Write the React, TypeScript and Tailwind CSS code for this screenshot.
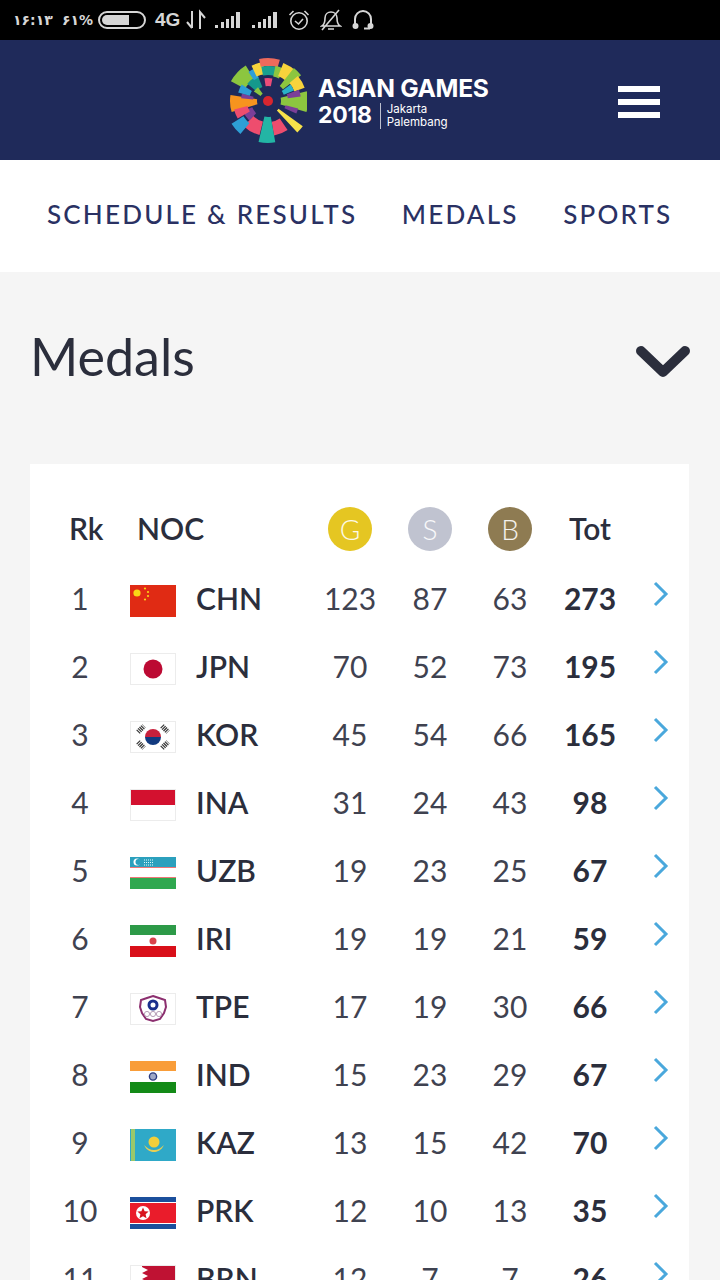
import type { ReactNode } from "react";

const sans = "font-['Lato','Noto_Sans',sans-serif]";

// [startDeg, endDeg, innerR, outerR, colour], clockwise from 12 o'clock
const sectors: [number, number, number, number, string][] = [
  [-62, -32, 26, 42, "#8cc63f"],
  [-50, -22, 15, 27, "#14988c"],
  [-34, -22, 25, 35, "#2e9fd6"],
  [-25, -7, 27, 39, "#f7d33c"],
  [-12, 16, 35, 43, "#ee6a5c"],
  [-11, 14, 26, 35, "#1aa08f"],
  [-9, 11, 15, 23, "#ec4c78"],
  [12, 26, 25, 36, "#8cc63f"],
  [22, 44, 27, 41, "#f7d33c"],
  [38, 52, 19, 42, "#8cc63f"],
  [50, 70, 28, 39, "#f7d33c"],
  [54, 68, 17, 28, "#29b2c8"],
  [-107, -81, 11, 38, "#f7941e"],
  [-84, -74, 15, 27, "#7b3f98"],
  [-74, -58, 19, 31, "#2e9fd6"],
  [-56, -36, 9, 17, "#8cc63f"],
  [76, 106, 13, 40, "#8cc63f"],
  [70, 82, 20, 33, "#7b3f98"],
  [104, 114, 18, 31, "#7b3f98"],
  [126, 137, 13, 43, "#f7e14a"],
  [146, 170, 21, 35, "#ee4d6e"],
  [170, 193, 16, 42, "#23b5a5"],
  [194, 224, 21, 35, "#ee4d6e"],
  [220, 238, 29, 43, "#2e9fd6"],
  [224, 248, 17, 27, "#7b3f98"],
  [240, 256, 21, 35, "#ee4d6e"],
];

function sectorPath(a: number, b: number, r1: number, r2: number) {
  const pt = (deg: number, r: number) => {
    const t = (deg * Math.PI) / 180;
    return `${(r * Math.sin(t)).toFixed(2)} ${(-r * Math.cos(t)).toFixed(2)}`;
  };
  return `M${pt(a, r2)}A${r2} ${r2} 0 0 1 ${pt(b, r2)}L${pt(b, r1)}A${r1} ${r1} 0 0 0 ${pt(a, r1)}Z`;
}

function Logo() {
  return (
    <svg width="78" height="88" viewBox="-39 -44 78 88" className="shrink-0 mt-[2px]">
      {sectors.map(([a, b, r1, r2, c], i) => (
        <path key={i} d={sectorPath(a, b, r1, r2)} fill={c} />
      ))}
      <circle r="5" fill="#d8262f" />
    </svg>
  );
}

function StatusBar() {
  return (
    <div className="h-10 bg-black flex items-center text-[#d6d6d6] font-['DejaVu_Sans',sans-serif] pl-[13px]">
      <span className="text-[14px] font-bold w-[49px]">۱۶:۱۳</span>
      <span className="text-[14px] font-bold w-[36px]">۶۱%</span>
      <div className="w-[48px] h-[18px] rounded-full border-2 border-[#d6d6d6] p-[2px] overflow-hidden">
        <div className="h-full w-[27px] bg-[#d6d6d6] rounded-l-full" />
      </div>
      <span className="ml-[9px] text-[19px] font-bold font-['Liberation_Sans',sans-serif]">4G</span>
      <svg width="20" height="22" viewBox="0 0 20 22" className="ml-[6px]" fill="none" stroke="#d6d6d6" strokeWidth="2">
        <path d="M6 2v17M1 13l5 6M14 20V3l5 6" />
      </svg>
      {[0, 1].map((n) => (
        <svg key={n} width="26" height="18" viewBox="0 0 26 18" className={n === 0 ? "ml-[9px]" : "ml-[11px]"} fill="#d6d6d6">
          <path d="M0 14h3v3H0zM6 11h3v6H6zM11 8h3v9h-3zM16 5h3v12h-3zM21 1h4v16h-4z" />
        </svg>
      ))}
      <svg width="22" height="22" viewBox="0 0 22 22" className="ml-[10px]" fill="none" stroke="#d6d6d6" strokeWidth="1.6">
        <circle cx="11" cy="12" r="8.2" />
        <path d="M7 12l3.500 3L15 10M1.500 6L5.500 2M20.500 6l-4-4" />
      </svg>
      <svg width="22" height="24" viewBox="0 0 22 24" className="ml-[10px]" fill="none" stroke="#d6d6d6" strokeWidth="1.6">
        <path d="M2 18c3-2 3-5 3-8 0-4 3-6 6-6s6 2 6 6c0 3 0 6 3 8zM8 21h6M2 22L19 2" />
      </svg>
      <svg width="22" height="22" viewBox="0 0 22 22" className="ml-[10px]" fill="none" stroke="#d6d6d6" strokeWidth="2">
        <path d="M3 16V10a8 8 0 0 1 16 0v6" />
        <circle cx="3.500" cy="17" r="2" fill="#d6d6d6" />
        <circle cx="18.500" cy="17" r="2" fill="#d6d6d6" />
        <path d="M18 19.500h-6" />
      </svg>
    </div>
  );
}

function Flag({ children, border }: { children: ReactNode; border?: boolean }) {
  return (
    <svg width="46" height="32" viewBox="0 0 46 32" className="block mt-[6px]">
      {children}
      {border && <rect x="0.5" y="0.5" width="45" height="31" fill="none" stroke="#ececec" />}
    </svg>
  );
}

const flags: Record<string, ReactNode> = {
  CHN: (
    <Flag>
      <rect width="46" height="32" fill="#e02b14" />
      <circle cx="7" cy="8" r="3.600" fill="#f9d616" />
      <circle cx="15" cy="3.500" r="1.100" fill="#f9d616" />
      <circle cx="18" cy="7" r="1.100" fill="#f9d616" />
      <circle cx="18" cy="11" r="1.100" fill="#f9d616" />
      <circle cx="15" cy="14.500" r="1.100" fill="#f9d616" />
    </Flag>
  ),
  JPN: (
    <Flag border>
      <rect width="46" height="32" fill="#fff" />
      <circle cx="23" cy="16" r="9.500" fill="#bc0a33" />
    </Flag>
  ),
  KOR: (
    <Flag border>
      <rect width="46" height="32" fill="#fff" />
      <path d="M15 16a8 8 0 0 1 16 0z" fill="#c8203c" />
      <path d="M15 16a8 8 0 0 0 16 0z" fill="#123a80" />
      <g stroke="#333" strokeWidth="5" strokeDasharray="1.200 .8">
        <path d="M8 11l6-6M32 5l6 6M8 21l6 6M32 27l6-6" />
      </g>
    </Flag>
  ),
  INA: (
    <Flag border>
      <rect width="46" height="32" fill="#fff" />
      <rect width="46" height="16" fill="#d3112f" />
    </Flag>
  ),
  UZB: (
    <Flag>
      <rect width="46" height="32" fill="#fff" />
      <rect width="46" height="10" fill="#2ba0bd" />
      <rect y="21" width="46" height="11" fill="#2fa84f" />
      <rect y="10" width="46" height="1" fill="#e77" />
      <rect y="20" width="46" height="1" fill="#e77" />
      <circle cx="7" cy="5" r="3.500" fill="#fff" />
      <circle cx="8.500" cy="5" r="3" fill="#2ba0bd" />
      <path d="M14 3h9M14 5.500h9M14 8h9" stroke="#dff" strokeDasharray="1 1" />
    </Flag>
  ),
  IRI: (
    <Flag>
      <rect width="46" height="32" fill="#fff" />
      <rect width="46" height="10" fill="#2d9a48" />
      <rect y="21" width="46" height="11" fill="#d90f19" />
      <circle cx="23" cy="16" r="3.500" fill="#d9434c" />
    </Flag>
  ),
  TPE: (
    <Flag border>
      <rect width="46" height="32" fill="#fff" />
      <path d="M23 3l6 2 6 2 1 7-2 6-4 6-7 2-7-2-4-6-2-6 1-7 6-2z" fill="#fff" stroke="#8c2f6f" strokeWidth="2" />
      <circle cx="23" cy="12" r="4" fill="#fff" stroke="#1b2f8c" strokeWidth="3" />
      <g fill="none" stroke="#b8a0b8" strokeWidth="1">
        <circle cx="17" cy="21" r="2.600" />
        <circle cx="23" cy="21" r="2.600" />
        <circle cx="29" cy="21" r="2.600" />
      </g>
    </Flag>
  ),
  IND: (
    <Flag>
      <rect width="46" height="32" fill="#fff" />
      <rect width="46" height="10" fill="#f99d39" />
      <rect y="21" width="46" height="11" fill="#138a17" />
      <circle cx="23" cy="15.500" r="3.600" fill="#9fa8c8" stroke="#2b3a80" strokeWidth="1.400" />
    </Flag>
  ),
  KAZ: (
    <Flag>
      <rect width="46" height="32" fill="#2fa9c8" />
      <rect x="1" width="4" height="32" fill="#9ac86a" />
      <circle cx="24" cy="13" r="5.500" fill="#f2cf3a" />
      <path d="M14 16c3 6 7 7 10 7s7-1 10-7c-3 3-6 5-10 5s-7-2-10-5z" fill="#e6cf55" />
    </Flag>
  ),
  PRK: (
    <Flag>
      <rect width="46" height="32" fill="#fff" />
      <rect width="46" height="5" fill="#1b4f9c" />
      <rect y="27" width="46" height="5" fill="#1b4f9c" />
      <rect y="6" width="46" height="20" fill="#ea1c2b" />
      <circle cx="13" cy="16" r="7" fill="#fff" />
      <path d="M13 10.500l1.600 3.700 4 .4-3 2.700.9 4-3.500-2.100-3.500 2.100.9-4-3-2.700 4-.4z" fill="#d8141f" />
    </Flag>
  ),
  BRN: (
    <Flag border>
      <rect width="46" height="32" fill="#fff" />
      <path d="M12 0h34v32H12l6-3-6-3 6-3-6-3 6-3-6-3 6-3-6-3 6-3-6-3z" fill="#bf1233" />
    </Flag>
  ),
};

const rows: [number, string, number, number, number, number][] = [
  [1, "CHN", 123, 87, 63, 273],
  [2, "JPN", 70, 52, 73, 195],
  [3, "KOR", 45, 54, 66, 165],
  [4, "INA", 31, 24, 43, 98],
  [5, "UZB", 19, 23, 25, 67],
  [6, "IRI", 19, 19, 21, 59],
  [7, "TPE", 17, 19, 30, 66],
  [8, "IND", 15, 23, 29, 67],
  [9, "KAZ", 13, 15, 42, 70],
  [10, "PRK", 12, 10, 13, 35],
  [11, "BRN", 12, 7, 7, 26],
];

const cols = "grid grid-cols-[100px_66px_114px_80px_80px_80px_80px_59px] items-center";

function Medal({ letter, color }: { letter: string; color: string }) {
  return (
    <div className="flex justify-center">
      <div className={`w-[44px] h-[44px] rounded-full flex items-center justify-center text-white/90 text-[28px] font-light ${color}`}>
        {letter}
      </div>
    </div>
  );
}

export default function App() {
  return (
    <div className={`h-[1280px] w-[720px] overflow-hidden bg-[#f5f5f5] text-[#2b2e3c] ${sans}`}>
      <StatusBar />
      <header className="h-[120px] bg-[#1f2a5a] flex items-center pl-[229px] pr-[60px]">
        <Logo />
        <div className="ml-[11px] mt-[5px] text-white font-['Inter',sans-serif] font-bold leading-none">
          <div className="text-[24.6px] tracking-[-0.3px]">ASIAN GAMES</div>
          <div className="flex items-center mt-[2px]">
            <span className="text-[23px] tracking-[-0.3px]">2018</span>
            <div className="ml-[8px] pl-[6px] border-l border-white/70 text-[11.5px] font-normal leading-[13px]">
              <div>Jakarta</div>
              <div>Palembang</div>
            </div>
          </div>
        </div>
        <div className="ml-auto mt-[3px] flex flex-col gap-[7px]">
          <div className="w-[42px] h-[6px] bg-white" />
          <div className="w-[42px] h-[6px] bg-white" />
          <div className="w-[42px] h-[6px] bg-white" />
        </div>
      </header>
      <nav className="h-[112px] bg-white flex items-center gap-[44.5px] pl-[47px] pb-[4px] text-[26px] font-medium tracking-[2.2px] text-[#2a3163] whitespace-nowrap">
        <span>SCHEDULE &amp; RESULTS</span>
        <span>MEDALS</span>
        <span>SPORTS</span>
      </nav>
      <div className="flex items-center justify-between h-[192px] pl-[30px] pr-[30px] pb-[25px]">
        <h1 className="text-[52px] font-normal">Medals</h1>
        <svg width="54" height="34" viewBox="0 0 54 34" fill="none" stroke="#2b2e3c" strokeWidth="10" strokeLinecap="round" strokeLinejoin="round" className="mt-[12px]">
          <path d="M5 6l22 21L49 6" />
        </svg>
      </div>
      <section className="ml-[30px] w-[659px] bg-white pt-[42px] text-[30px]">
        <div className={`${cols} h-[44px] font-semibold`}>
          <span className="pl-[39px]">Rk</span>
          <span className="col-span-2 pl-[7px]">NOC</span>
          <Medal letter="G" color="bg-[#e5c622]" />
          <Medal letter="S" color="bg-[#c0c3d0]" />
          <Medal letter="B" color="bg-[#8e7b52]" />
          <span className="text-center">Tot</span>
        </div>
        <div className="mt-[14px]">
          {rows.map(([rank, code, g, s, b, tot]) => (
            <div key={code} className={`${cols} h-[68px]`}>
              <span className="text-center text-[#3f4250]">{rank}</span>
              <div>{flags[code]}</div>
              <span className="font-semibold">{code}</span>
              <span className="text-center text-[#3f4250]">{g}</span>
              <span className="text-center text-[#3f4250]">{s}</span>
              <span className="text-center text-[#3f4250]">{b}</span>
              <span className="text-center font-bold">{tot}</span>
              <svg width="16" height="26" viewBox="0 0 16 26" fill="none" stroke="#4aa8dc" strokeWidth="3" className="ml-[23px] mb-[8px]">
                <path d="M2 2l11 11L2 24" />
              </svg>
            </div>
          ))}
        </div>
      </section>
    </div>
  );
}
